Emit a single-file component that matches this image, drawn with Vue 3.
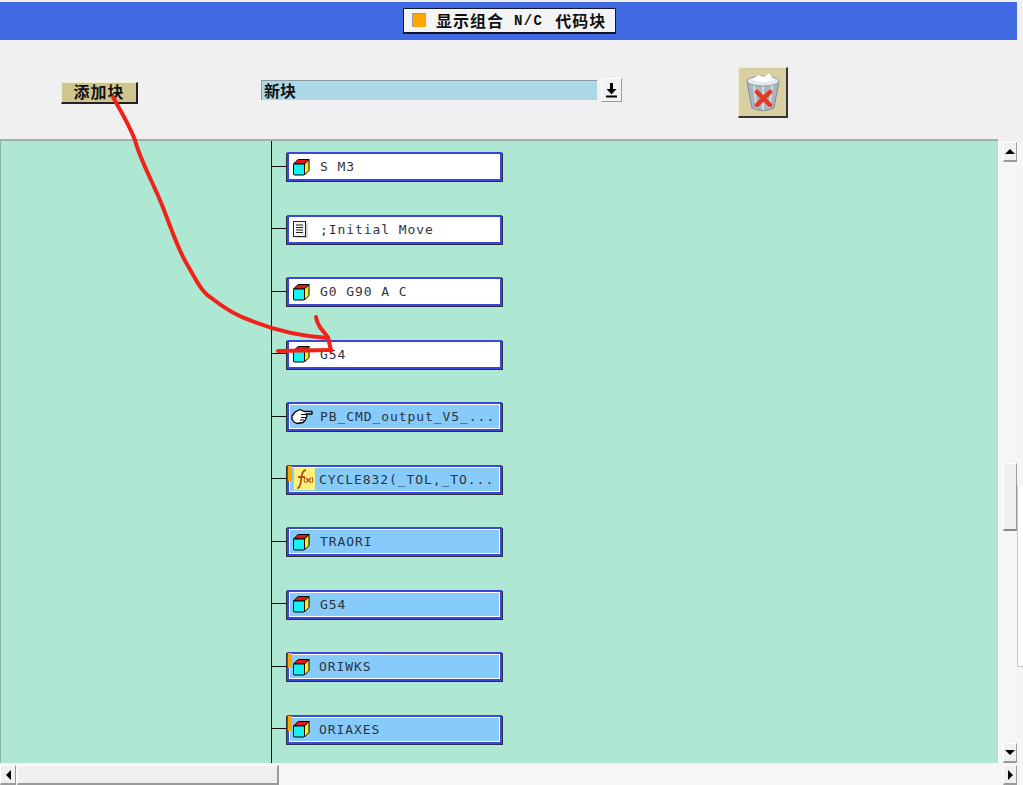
<script setup>
const nodes = [
  { label: 'S M3', icon: 'cube' },
  { label: ';Initial Move', icon: 'note' },
  { label: 'G0 G90 A C', icon: 'cube' },
  { label: 'G54', icon: 'cube' },
  { label: 'PB_CMD_output_V5_...', icon: 'hand', active: true },
  { label: 'CYCLE832(_TOL,_TO...', icon: 'fx', active: true, flag: true },
  { label: 'TRAORI', icon: 'cube', active: true },
  { label: 'G54', icon: 'cube', active: true },
  { label: 'ORIWKS', icon: 'cube', active: true, flag: true },
  { label: 'ORIAXES', icon: 'cube', active: true, flag: true }
]
</script>

<template>
  <div class="page">
    <header class="titlebar">
      <div class="title">
        <span class="swatch"></span>
        <span>显示组合</span>
        <span class="title-mono">N/C</span>
        <span>代码块</span>
      </div>
    </header>

    <div class="toolbar">
      <button type="button" class="add-btn">添加块</button>
      <div class="picker">新块</div>
      <button type="button" class="drop-btn" aria-label="展开">
        <svg width="13" height="16" viewBox="0 0 13 16">
          <path d="M5 1h3v6h3.500L6.500 12.500 1.500 7H5z" fill="#000" />
          <rect x="1" y="13.500" width="11" height="2" fill="#000" />
        </svg>
      </button>
      <button type="button" class="trash-btn" aria-label="删除">
        <svg width="36" height="40" viewBox="0 0 36 40">
          <path d="M2 9 L7 36 Q18 41 29 36 L34 9 Z" fill="#aab6be" stroke="#7f8c96" />
          <path d="M9 13 L11.500 36 M18 14 V38 M27 13 L24.500 36" stroke="#d3dbe0" stroke-width="2" fill="none" />
          <ellipse cx="18" cy="9" rx="16" ry="5" fill="#e4e9ec" stroke="#8d9ba6" />
          <path d="M7 8 L13 3 L19 5 L24 1 L29 8 Q18 12 7 8Z" fill="#fff" />
          <path d="M12 20 L25 33 M25 20 L12 33" stroke="#e03a28" stroke-width="4.500" stroke-linecap="round" />
        </svg>
      </button>
    </div>

    <div class="middle">
      <main class="canvas">
        <div class="tree">
          <div v-for="(node, i) in nodes" :key="i" class="row">
            <span class="stub"></span>
            <div class="node" :class="{ active: node.active }">
              <span v-if="node.flag" class="flag"></span>
              <span class="icon" :class="{ 'icon-fx': node.icon === 'fx', 'icon-hand': node.icon === 'hand' }">
                <svg v-if="node.icon === 'cube'" width="18" height="18" viewBox="0 0 18 18">
                  <path d="M1.500 6 L6 1.500 H17 L12.500 6 Z" fill="#e8141c" stroke="#000" stroke-linejoin="round" />
                  <path d="M12.500 6 L17 1.500 V12.500 L12.500 17 Z" fill="#f7f01c" stroke="#000" stroke-linejoin="round" />
                  <rect x="1.500" y="6" width="11" height="11" rx="1" fill="#18f0f4" stroke="#000" />
                </svg>
                <svg v-else-if="node.icon === 'note'" width="18" height="18" viewBox="0 0 18 18">
                  <rect x="1.500" y="1.500" width="12" height="15" fill="#f4f4f4" stroke="#222" />
                  <path d="M4 5h7M4 7.500h7M4 10h7M4 12.500h7" stroke="#222" />
                  <path d="M15 3v15H3" stroke="#aaa" fill="none" />
                </svg>
                <svg v-else-if="node.icon === 'hand'" width="22" height="17" viewBox="0 0 22 17">
                  <path d="M1 8 L4 4 L9 1.500 L13 3.500 H21 V6 H15 L16 8 L15 10.500 L14 12.500 L12 14.500 L6 15.500 L3 14 L1 11 Z" fill="#fff" stroke="#000" stroke-width="1.300" stroke-linejoin="round" />
                  <path d="M10 6.500h6M10 9.500h5M9 12h4" stroke="#000" stroke-width="1.200" fill="none" />
                </svg>
                <svg v-else width="21" height="22" viewBox="0 0 21 22">
                  <path d="M3 20 Q6 21 7 12 Q8 2 12 2 M4 9h7" stroke="#a5561a" stroke-width="1.800" fill="none" />
                  <path d="M11 9 Q9 12 11 15 M18 9 Q20 12 18 15" stroke="#a5561a" fill="none" />
                  <path d="M12 10 L17 14.500 M17 10 L12 14.500" stroke="#c0441a" stroke-width="1.300" fill="none" />
                </svg>
              </span>
              <span class="label" :class="{ 'label-tight': node.flag }">{{ node.label }}</span>
            </div>
          </div>
        </div>
      </main>
      <aside class="vscroll">
        <button type="button" class="sb-btn sb-up" aria-label="上"><i class="tri tri-up"></i></button>
        <div class="sb-track"><div class="sb-thumb-v"></div></div>
        <button type="button" class="sb-btn sb-down" aria-label="下"><i class="tri tri-down"></i></button>
      </aside>
      <div class="edge"><div class="edge-patch"></div></div>
    </div>

    <div class="hscroll">
      <button type="button" class="sb-btn sb-left" aria-label="左"><i class="tri tri-left"></i></button>
      <div class="sb-thumb-h"></div>
      <div class="sb-fill"></div>
      <button type="button" class="sb-btn sb-right" aria-label="右"><i class="tri tri-right"></i></button>
    </div>

    <!-- hand-drawn annotation sits on top of the screenshot -->
    <svg class="scribble" width="1023" height="785" viewBox="0 0 1023 785">
      <g fill="none" stroke="#f0231a" stroke-width="4" stroke-linecap="round" stroke-linejoin="round">
        <path d="M113 97 C120 110 128 122 135 140 C140 160 152 180 162 205 C172 230 178 250 188 266 C196 280 202 292 210 297 C224 308 236 316 252 321 C272 329 300 336 328 338" />
        <path d="M316 317 C317 325 322 330 328 337 L331 351" />
        <path d="M278 351 L331 350" />
      </g>
    </svg>
  </div>
</template>

<style>
html, body { margin: 0; background: #f0f0f0; overflow: hidden; }
</style>

<style scoped>
.page {
  position: relative;
  width: 1023px;
  height: 785px;
  overflow: hidden;
  display: flex;
  flex-direction: column;
  background: #f0f0f0;
  font-family: "Noto Sans CJK SC", "Liberation Sans", sans-serif;
}
button { padding: 0; font: inherit; }

.titlebar {
  flex: none;
  height: 37px;
  margin-top: 2px;
  margin-right: 6px;
  display: flex;
  justify-content: center;
  align-items: center;
  padding-left: 2px;
  padding-bottom: 1px;
  background: #4169e1;
}
.title {
  width: 213px;
  height: 26px;
  box-sizing: border-box;
  display: flex;
  align-items: center;
  gap: 9px;
  padding-left: 8px;
  background: #f4f4f4;
  border: 1px solid #10162c;
  border-bottom-width: 2px;
  font-size: 16px;
  letter-spacing: 1px;
  font-weight: 700;
  line-height: 1;
  color: #111;
  white-space: nowrap;
}
.swatch {
  width: 14px;
  height: 14px;
  margin-right: 1px;
  background: #ffa500;
  border-left: 1px solid #999;
  border-top: 1px solid #999;
  box-sizing: border-box;
}
.title-mono {
  font-family: "Liberation Mono", monospace;
  font-size: 14px;
  letter-spacing: 1.300px;
  margin: 2px 3px 0 1px;
}

.toolbar {
  flex: none;
  width: 998px;
  height: 101px;
  box-sizing: border-box;
  display: flex;
  align-items: flex-start;
  padding-left: 61px;
  border-bottom: 2px solid #9fb0aa;
}
.add-btn {
  width: 77px;
  height: 22px;
  margin-top: 42px;
  box-sizing: border-box;
  padding-bottom: 2px;
  background: #cfc58f;
  border: 0;
  border-top: 1px solid #f3edc8;
  border-left: 1px solid #f3edc8;
  border-right: 2px solid #222;
  border-bottom: 2px solid #222;
  font-size: 16px;
  letter-spacing: 1px;
  font-weight: 700;
  line-height: 17px;
  color: #111;
}
.picker {
  width: 336px;
  height: 20px;
  margin-top: 40px;
  margin-left: 123px;
  box-sizing: border-box;
  padding-left: 2px;
  background: #add8e6;
  border-top: 1px solid #8b9ba2;
  border-left: 1px solid #8b9ba2;
  font-size: 16px;
  font-weight: 700;
  line-height: 18px;
  color: #111;
}
.drop-btn {
  width: 21px;
  height: 24px;
  margin-top: 38px;
  margin-left: 4px;
  box-sizing: border-box;
  display: flex;
  align-items: center;
  justify-content: center;
  background: #f2f2f2;
  border: 0;
  border-top: 1px solid #fff;
  border-left: 1px solid #fff;
  border-right: 1px solid #9a9a9a;
  border-bottom: 1px solid #9a9a9a;
}
.trash-btn {
  width: 50px;
  height: 51px;
  margin-top: 27px;
  margin-left: 116px;
  box-sizing: border-box;
  display: flex;
  align-items: center;
  justify-content: center;
  background: #d8cfa3;
  border: 0;
  border-top: 1px solid #f0ebcf;
  border-left: 1px solid #f0ebcf;
  border-right: 2px solid #333;
  border-bottom: 2px solid #333;
}

.middle {
  flex: 1;
  min-height: 0;
  display: flex;
}
.canvas {
  width: 998px;
  box-sizing: border-box;
  padding-left: 270px;
  background: #aee8d2;
  border-left: 1px solid #8fb8a8;
}
.tree {
  height: 100%;
  box-sizing: border-box;
  padding-top: 11px;
  border-left: 1px solid #111;
  display: flex;
  flex-direction: column;
  gap: 33.500px;
  overflow: hidden;
}
.row {
  display: flex;
  align-items: center;
  height: 29px;
  flex: none;
}
.stub {
  width: 15px;
  height: 1px;
  background: #111;
  margin-top: -1px;
}
.node {
  position: relative;
  width: 215px;
  height: 29px;
  box-sizing: border-box;
  display: flex;
  align-items: center;
  gap: 10px;
  padding-left: 3px;
  background: #fff;
  border: 2px solid #3c46d8;
  box-shadow: 1px 1px 0 #2a3040, -1px 1px 0 #2a3040, inset 0 0 0 1px #fff;
}
.node.active { background: #87cbfa; }
.flag {
  position: absolute;
  left: -1px;
  top: -1px;
  width: 4px;
  height: 15px;
  background: #ffa500;
}
.icon {
  width: 18px;
  height: 18px;
  flex: none;
  display: flex;
  align-items: center;
  justify-content: center;
}
.icon-fx {
  width: 21px;
  height: 22px;
  margin-left: 2px;
  margin-right: -5px;
  background: #fdf07a;
}
.icon-hand {
  width: 22px;
  margin-left: -1px;
  margin-right: -3px;
}
.label {
  font-family: "DejaVu Sans Mono", monospace;
  font-size: 13px;
  letter-spacing: 0.930px;
  color: #2b3540;
  white-space: nowrap;
}
.label-tight { margin-left: -1px; }

.vscroll {
  width: 19px;
  display: flex;
  flex-direction: column;
  align-items: flex-end;
  background: #f6f6f6;
  border-left: 1px solid #fff;
  box-sizing: border-box;
}
.sb-btn {
  flex: none;
  display: flex;
  align-items: center;
  justify-content: center;
  box-sizing: border-box;
  background: #f0f0f0;
  border: 0;
  border-top: 1px solid #fff;
  border-left: 1px solid #fff;
  border-right: 1px solid #9a9a9a;
  border-bottom: 2px solid #9a9a9a;
}
.sb-up, .sb-down { width: 14px; height: 20px; }
.sb-up { margin-top: 1px; }
.sb-left, .sb-right { width: 16px; height: 20px; }
.sb-right { width: 14px; margin-right: 6px; }
.sb-track { flex: 1; width: 14px; padding-top: 301px; box-sizing: border-box; }
.sb-thumb-v {
  height: 68px;
  box-sizing: border-box;
  background: #efefef;
  border-top: 1px solid #fff;
  border-left: 1px solid #fff;
  border-right: 1px solid #9a9a9a;
  border-bottom: 2px solid #8a8a8a;
}
.edge {
  flex: 1;
  padding-top: 345px;
  background: #f5f5f5;
}
.edge-patch {
  height: 181px;
  box-sizing: border-box;
  background: #fff;
  border-left: 1px solid #c8c8c8;
  border-bottom: 1px solid #c8c8c8;
}
.tri { display: block; width: 0; height: 0; border-style: solid; border-color: transparent; }
.tri-up { border-width: 0 5px 5px; border-bottom-color: #000; }
.tri-down { border-width: 5px 5px 0; border-top-color: #000; }
.tri-left { border-width: 5px 5px 5px 0; border-right-color: #000; }
.tri-right { border-width: 5px 0 5px 5px; border-left-color: #000; }

.hscroll {
  flex: none;
  height: 22px;
  box-sizing: border-box;
  padding-top: 2px;
  display: flex;
  background: #f6f6f6;
}
.sb-thumb-h {
  width: 262px;
  margin-left: 1px;
  box-sizing: border-box;
  background: #efefef;
  border-top: 1px solid #fff;
  border-left: 1px solid #fff;
  border-right: 2px solid #9a9a9a;
  border-bottom: 2px solid #9a9a9a;
}
.sb-fill { flex: 1; }

.scribble {
  position: absolute;
  left: 0;
  top: 0;
  pointer-events: none;
}
</style>
